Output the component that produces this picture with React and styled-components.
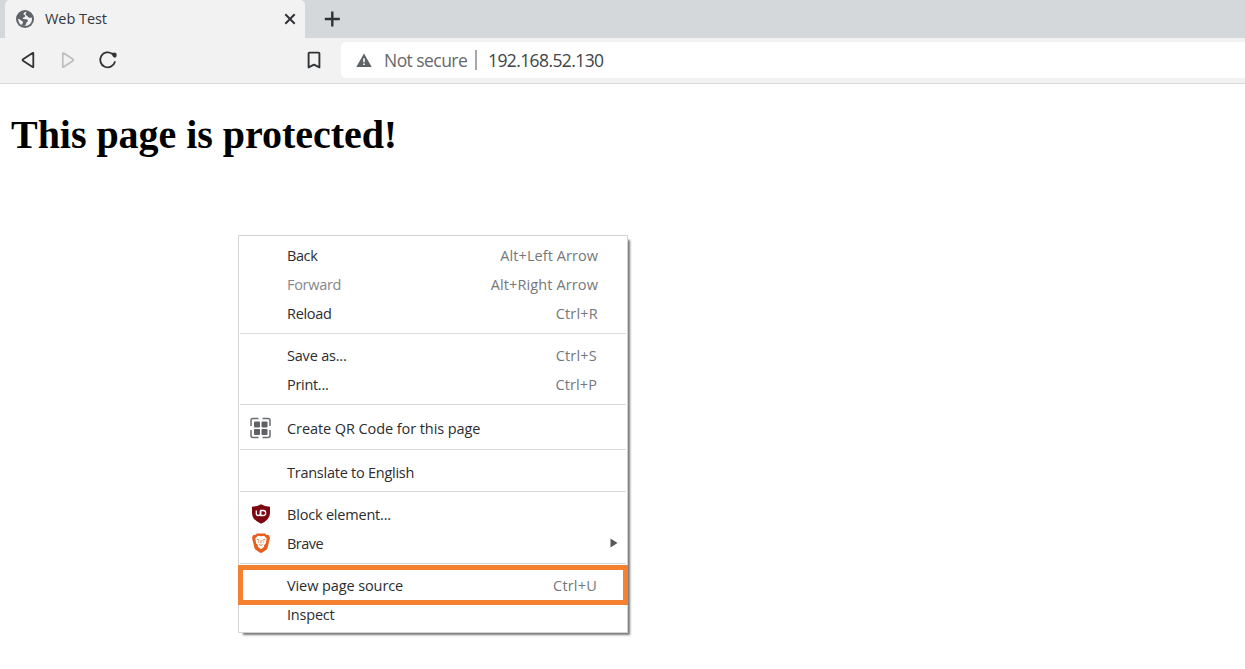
import React from 'react';
import styled, { createGlobalStyle } from 'styled-components';

const Global = createGlobalStyle`
  * { box-sizing: border-box; }
  body { margin: 0; background: #fff; overflow: hidden; font-family: "Open Sans", "Noto Sans", sans-serif; }
`;

const Browser = styled.div`
  display: flex;
  flex-direction: column;
  height: 669px;
  width: 1245px;
`;

const TabStrip = styled.div`
  display: flex;
  height: 38px;
  padding-left: 5px;
  background: #d4d8db;
`;

const Tab = styled.div`
  display: flex;
  align-items: center;
  width: 300px;
  padding: 0 8px 0 10px;
  background: #f2f2f2;
  border-radius: 5px 5px 0 0;
`;

const TabTitle = styled.span`
  flex: 1;
  margin-left: 10px;
  font-size: 14.5px;
  line-height: 20px;
  letter-spacing: -0.05px;
  color: #35383b;
`;

const Glyph = styled.svg`
  display: block;
  flex: none;
`;

const NewTab = styled.div`
  display: flex;
  align-items: center;
  padding-left: 19px;
`;

const Toolbar = styled.div`
  display: flex;
  align-items: center;
  height: 46px;
  padding: 0 0 1px 18px;
  background: #f2f2f2;
  border-bottom: 1px solid #d8d9da;
`;

const NavButtons = styled.div`
  display: flex;
  gap: 20px;
  flex: none;
  width: 286px;
`;

const Address = styled.div`
  display: flex;
  align-items: center;
  flex: 1;
  height: 36px;
  margin-left: 17px;
  padding-left: 15px;
  background: #fff;
  border-radius: 5px 0 0 5px;
`;

const Security = styled.span`
  width: 93px;
  margin-left: 12px;
  font-size: 17.5px;
  letter-spacing: -0.55px;
  white-space: nowrap;
  color: #66696c;
  border-right: 2px solid #a5a7a9;
  line-height: 20px;
`;

const Url = styled.span`
  margin-left: 11px;
  font-size: 17.5px;
  line-height: 20px;
  letter-spacing: -0.6px;
  color: #414447;
`;

const Page = styled.main`
  position: relative;
  flex: 1;
  padding: 28px 11px;
`;

const Heading = styled.h1`
  margin: 0;
  font: bold 40px/46px "Liberation Serif", serif;
  letter-spacing: -0.04px;
  color: #000;
`;

const Menu = styled.div`
  position: absolute;
  left: 238px;
  top: 151px;
  width: 390px;
  height: 398px;
  background: #fff;
  border: 1px solid #d3d4d5;
  box-shadow: 3px 3px 2px -1.5px #777;
`;

const Group = styled.div`
  padding: ${(p) => p.$top}px 0 ${(p) => p.$bottom}px;
  margin: 0 1px;
  border-bottom: ${(p) => (p.$last ? '0' : '1px solid #dadbdc')};
`;

const Row = styled.div`
  display: flex;
  align-items: center;
  height: 29px;
  padding: 0 ${(p) => p.$right ?? 28}px 0 10px;
  font-size: 14.5px;
  color: ${(p) => (p.$disabled ? '#85878a' : '#2b2d30')};
`;

const IconSlot = styled.span`
  display: flex;
  flex: none;
  width: 37px;
  padding-bottom: 2px;
`;

const Label = styled.span`
  flex: 1;
  white-space: nowrap;
  letter-spacing: ${(p) => p.$spacing}px;
`;

const Shortcut = styled.span`
  color: #75777a;
  letter-spacing: ${(p) => p.$spacing}px;
`;

const Highlight = styled.div`
  position: absolute;
  left: -1px;
  top: 329px;
  width: 390px;
  height: 40px;
  border: 5px solid #f4812f;
`;

const Globe = () => (
  <Glyph width="20" height="20" viewBox="0 0 20 20">
    <circle cx="10" cy="10" r="9" fill="#5f6368" />
    <path d="M10.5 2.8c-1 .8-2 .8-2 2.2 0 .9 1.2.6 1.6 1.4.4.9-.5 1.8-1.5 2-1 .3-1.1 1.4-.3 1.6l3 .3c1.3.2 1.8 1 1.5 2l-1.2 1.3c-.7.7-.3 2-1.3 2.8-1 .9-2.9 0-4-.6.6-.8 1.7-1.3 1.7-2.4 0-1.3-1.8-1.3-2.4-2.3-.5-.9-1.7-1-2.9-1.4L3.300 11c.4 3.800 3.200 6 6.700 6 4.100 0 7-3.100 7-7 0-.6-.1-1-.2-1.500-.9.2-2 .6-3 .1-.9-.4-.8-1.400-1.900-1.800-1.200-.5-1.700-1.400-1.200-2.300.3-.6.8-.9.7-1.400z" fill="#f2f2f2" />
  </Glyph>
);

const BackIcon = () => (
  <Glyph width="20" height="20" viewBox="0 0 20 20" fill="none" stroke="#303336" strokeWidth="1.8" strokeLinejoin="round">
    <path d="M15.300 3v14q-.2.3-.7 0L5 10.700q-.8-.7 0-1.400L14.600 3z" />
  </Glyph>
);

const ForwardIcon = () => (
  <Glyph width="20" height="20" viewBox="0 0 20 20" fill="none" stroke="#bcbec0" strokeWidth="1.7" strokeLinejoin="round">
    <path d="M4.800 3v14q.2.3.7 0L15 10.700q.8-.7 0-1.400L5.500 3z" />
  </Glyph>
);

const ReloadIcon = () => (
  <Glyph width="20" height="20" viewBox="0 0 20 20" fill="none" stroke="#303336" strokeWidth="1.8" strokeLinecap="round">
    <path d="M14.300 3.900A7.500 7.500 0 1 0 16.900 12" />
    <path d="M14 4q-.2-1 .8-1h2.400q1 0 1 1v2q0 1.200-1 1.200h-.8q-.8 0-1.200-.8z" fill="#303336" stroke="#303336" strokeWidth=".6" />
  </Glyph>
);

const BookmarkIcon = () => (
  <Glyph width="20" height="20" viewBox="0 0 20 20" fill="none" stroke="#303336" strokeWidth="1.9" strokeLinejoin="round">
    <path d="M4.600 3.400q0-.8.8-.8h9.200q.8 0 .8.8v14L10 14.700l-5.400 2.700z" />
  </Glyph>
);

const WarningIcon = () => (
  <Glyph width="16" height="16" viewBox="0 0 16 16">
    <path d="M8 1.500 15.700 15H.3z" fill="#5f6368" />
    <path d="M7.200 6.300h1.600v4H7.200zM7.200 11.500h1.600V13H7.200z" fill="#fff" />
  </Glyph>
);

const QrIcon = () => (
  <Glyph width="22" height="22" viewBox="0 0 22 22">
    <g transform="translate(-.5 0)">
      <path d="M1.500 9V3.500q0-2 2-2H9M13 1.500h5.500q2 0 2 2V9M20.500 13v5.500q0 2-2 2H13M9 20.500H3.500q-2 0-2-2V13" fill="none" stroke="#6b6e71" strokeWidth="1.500" />
      <g fill="#5f6265">
        <rect x="4.500" y="4.500" width="6" height="6" rx="1" />
        <rect x="12" y="4.500" width="6" height="6" rx="1" />
        <rect x="4.500" y="12" width="6" height="6" rx="1" />
        <rect x="12" y="12" width="6" height="6" rx="1" />
      </g>
    </g>
  </Glyph>
);

const BlockerIcon = () => (
  <Glyph width="22" height="20" viewBox="0 0 22 20">
    <path d="M11 .3Q14.500 2.700 20 2.700V9q0 7-9 10.700Q2 16 2 9V2.700Q7.500 2.700 11 .3" fill="#7d0710" />
    <path d="M6.300 6.500v3q0 2 2 2t2-2v-3M10.800 6.500v5h2.400q2.500 0 2.500-2.500t-2.500-2.500z" fill="none" stroke="#fff" strokeWidth="1.300" />
  </Glyph>
);

const BraveIcon = () => (
  <Glyph width="22" height="20" viewBox="0 0 22 20">
    <path d="M7 .4h8l1.700 1.700 2-.2L20 4.800l-.5 2-2 8.200q-.4 1.300-1.500 2.100l-3.700 2.500q-1.300.8-2.600 0L6 17.100Q4.900 16.300 4.500 15l-2-8.200-.5-2 1.300-2.900 2 .2z" fill="#e85d1a" />
    <path d="m11 3.200 3-.5L16.700 5.300l-.8 5-2 2.300.3 1.200L11 16.200l-3.200-2.400.3-1.200-2-2.300-.8-5L8 2.700z" fill="#fff" />
    <path d="m6.800 6.400 2.600.8M15.200 6.400l-2.600.8M11 7.200v3.200M9.200 11.600l1.800.8 1.800-.8M9 9H7.800M13 9h1.200" fill="none" stroke="#ea7439" strokeWidth="1" />
  </Glyph>
);

const groups = [
  { top: 5, bottom: 5, rows: [
    { label: 'Back', keys: 'Alt+Left Arrow', ks: 0.06, ls: -0.4 },
    { label: 'Forward', keys: 'Alt+Right Arrow', ks: 0.11, ls: -0.3, disabled: true },
    { label: 'Reload', keys: 'Ctrl+R', ks: 0.2, ls: -0.3 },
  ] },
  { top: 7, bottom: 5, rows: [
    { label: 'Save as...', keys: 'Ctrl+S', right: 29, ks: 0.2 },
    { label: 'Print...', keys: 'Ctrl+P', right: 29, ks: 0.1, ls: -0.3 },
  ] },
  { top: 9, bottom: 6, rows: [{ label: 'Create QR Code for this page', icon: <QrIcon />, ls: -0.08 }] },
  { top: 8, bottom: 4, rows: [{ label: 'Translate to English', ls: -0.25 }] },
  { top: 8, bottom: 5, rows: [
    { label: 'Block element...', icon: <BlockerIcon /> },
    { label: 'Brave', icon: <BraveIcon />, submenu: true, right: 8, ls: -0.5 },
  ] },
  { top: 7, bottom: 0, rows: [
    { label: 'View page source', keys: 'Ctrl+U', right: 29, ks: 0.2, ls: -0.1 },
    { label: 'Inspect' },
  ] },
];

export default function App() {
  return (
    <Browser>
      <Global />
      <TabStrip>
        <Tab>
          <Globe />
          <TabTitle>Web Test</TabTitle>
          <Glyph width="14" height="14" viewBox="0 0 14 14" stroke="#303336" strokeWidth="2">
            <path d="m2.300 2.300 9.400 9.400M11.700 2.300l-9.400 9.400" />
          </Glyph>
        </Tab>
        <NewTab>
          <Glyph width="16" height="16" viewBox="0 0 16 16" stroke="#303336" strokeWidth="2.400">
            <path d="M8.300.5v15M.8 8h15" />
          </Glyph>
        </NewTab>
      </TabStrip>
      <Toolbar>
        <NavButtons>
          <BackIcon />
          <ForwardIcon />
          <ReloadIcon />
        </NavButtons>
        <BookmarkIcon />
        <Address>
          <WarningIcon />
          <Security>Not secure</Security>
          <Url>192.168.52.130</Url>
        </Address>
      </Toolbar>
      <Page>
        <Heading>This page is protected!</Heading>
        <Menu>
          {groups.map((g, i) => (
            <Group key={i} $top={g.top} $bottom={g.bottom} $last={i === groups.length - 1}>
              {g.rows.map((r) => (
                <Row key={r.label} $right={r.right} $disabled={r.disabled}>
                  <IconSlot>{r.icon}</IconSlot>
                  <Label $spacing={r.ls ?? -0.2}>{r.label}</Label>
                  {r.keys && <Shortcut $spacing={r.ks ?? 0}>{r.keys}</Shortcut>}
                  {r.submenu && (
                    <Glyph width="8" height="12" viewBox="0 0 8 12">
                      <path d="M.5.5 7.500 5 .5 9.500z" fill="#55585b" />
                    </Glyph>
                  )}
                </Row>
              ))}
            </Group>
          ))}
          <Highlight />
        </Menu>
      </Page>
    </Browser>
  );
}
